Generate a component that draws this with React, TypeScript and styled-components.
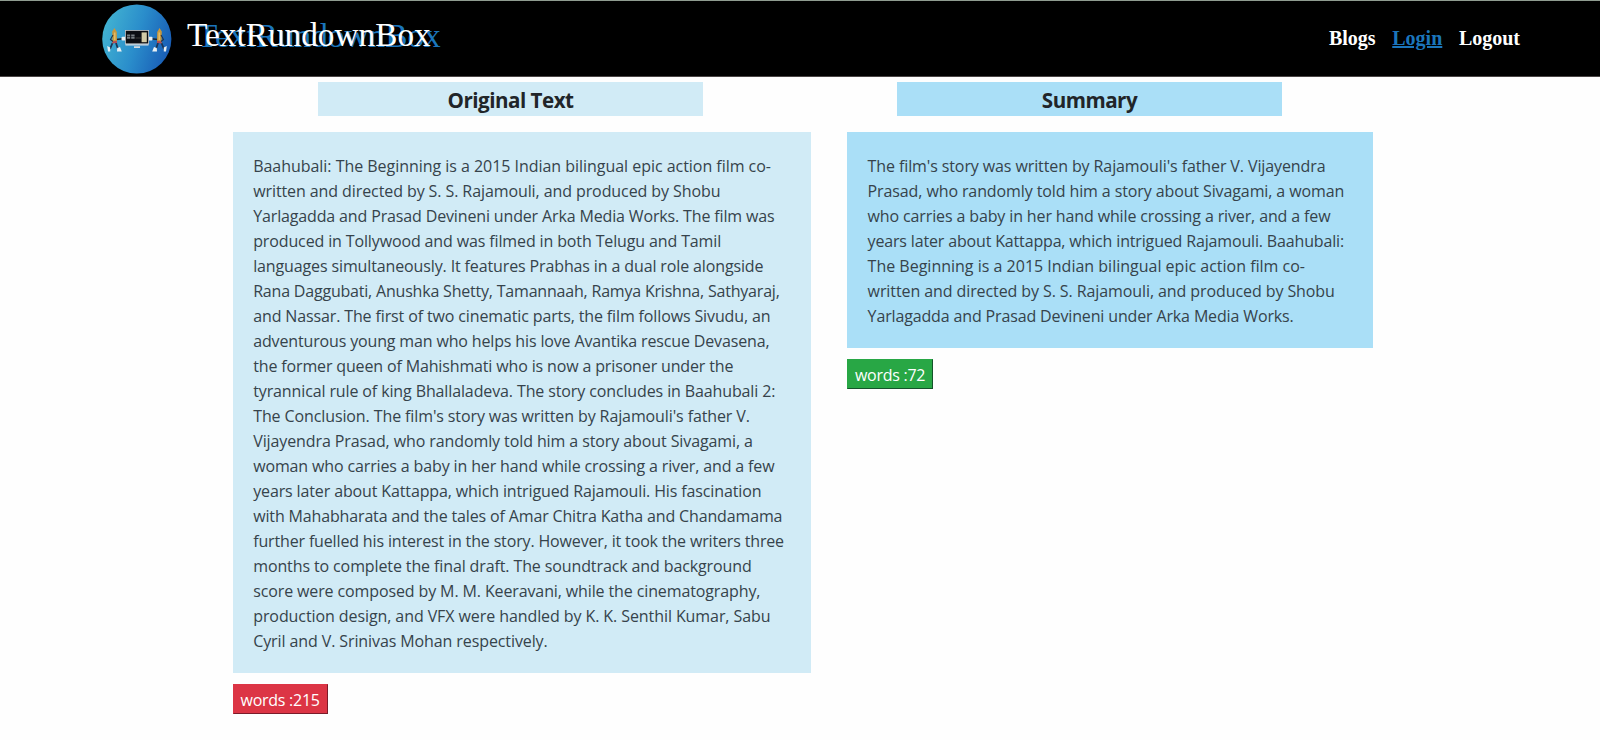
import React from "react";
import styled, { createGlobalStyle } from "styled-components";

const GlobalStyle = createGlobalStyle`
  *, *::before, *::after { box-sizing: border-box; }
  body {
    margin: 0;
    background: #fefefe;
    color: #212529;
    font-family: "Open Sans", "Noto Sans", sans-serif;
  }
`;

const Header = styled.header`
  display: flex;
  align-items: center;
  height: 77px;
  padding: 0 80px 0 102px;
  background: #000;
  border-top: 1px solid #8f9c90;
  border-bottom: 1px solid #4a4545;
  font-family: "Liberation Serif", serif;
`;

const Logo = styled.svg`
  display: block;
  width: 70px;
  height: 70px;
  flex: none;
`;

const Brand = styled.div`
  margin: -8px 0 0 15px;
  color: #fff;
  font-size: 33.3px;
  line-height: 40px;
  text-shadow: 10px 1px 0 #1b75bb;
`;

const Nav = styled.nav`
  display: flex;
  gap: 16.6px;
  margin: -1px 0 0 auto;
`;

const NavLink = styled.a<{ $active?: boolean }>`
  color: ${(p) => (p.$active ? "#1b75bb" : "#fff")};
  font-size: 20px;
  font-weight: 700;
  line-height: 24px;
  text-decoration: ${(p) => (p.$active ? "underline" : "none")};
`;

const Titles = styled.div`
  display: flex;
  gap: 194px;
  margin: 5px 0 16px 318px;
`;

const Title = styled.h2<{ $tone: string }>`
  width: 385px;
  height: 34px;
  margin: 0;
  background: ${(p) => p.$tone};
  font-size: 20.6px;
  font-weight: 700;
  line-height: 37px;
  letter-spacing: -0.5px;
  text-align: center;
`;

const Columns = styled.main`
  display: flex;
  align-items: flex-start;
  gap: 36px;
  margin-left: 232.6px;
`;

const Column = styled.section<{ $width: number }>`
  display: flex;
  flex-direction: column;
  align-items: flex-start;
  gap: 10.8px;
  width: ${(p) => p.$width}px;
`;

const Panel = styled.div<{ $tone: string }>`
  width: 100%;
  padding: 22.4px 0 19.3px 20.6px;
  background: ${(p) => p.$tone};
  color: #36434b;
  font-size: 16px;
  line-height: 24.97px;
`;

const Line = styled.div<{ $spacing: number }>`
  letter-spacing: ${(p) => p.$spacing}px;
  white-space: nowrap;
`;

const WordCount = styled.button<{ $tone: string; $edge: string; $width: number }>`
  width: ${(p) => p.$width}px;
  height: 30px;
  padding: 2px 0 0 7px;
  border: 1px solid ${(p) => p.$tone};
  border-right: 1px solid ${(p) => p.$edge};
  border-bottom: 1px solid ${(p) => p.$edge};
  background: ${(p) => p.$tone};
  color: #fff;
  font: 16px/24px "Open Sans", "Noto Sans", sans-serif;
  letter-spacing: -0.27px;
  text-align: left;
  white-space: nowrap;
`;

const PALE = "#d1ebf6";
const SKY = "#aadff7";

type TextLine = [text: string, spacing: number];

const original: TextLine[] = [
  ["Baahubali: The Beginning is a 2015 Indian bilingual epic action film co-", -0.036],
  ["written and directed by S. S. Rajamouli, and produced by Shobu", -0.09],
  ["Yarlagadda and Prasad Devineni under Arka Media Works. The film was", -0.145],
  ["produced in Tollywood and was filmed in both Telugu and Tamil", -0.13],
  ["languages simultaneously. It features Prabhas in a dual role alongside", -0.127],
  ["Rana Daggubati, Anushka Shetty, Tamannaah, Ramya Krishna, Sathyaraj,", -0.2],
  ["and Nassar. The first of two cinematic parts, the film follows Sivudu, an", -0.13],
  ["adventurous young man who helps his love Avantika rescue Devasena,", -0.149],
  ["the former queen of Mahishmati who is now a prisoner under the", -0.145],
  ["tyrannical rule of king Bhallaladeva. The story concludes in Baahubali 2:", -0.12],
  ["The Conclusion. The film's story was written by Rajamouli's father V.", -0.108],
  ["Vijayendra Prasad, who randomly told him a story about Sivagami, a", -0.098],
  ["woman who carries a baby in her hand while crossing a river, and a few", -0.137],
  ["years later about Kattappa, which intrigued Rajamouli. His fascination", -0.129],
  ["with Mahabharata and the tales of Amar Chitra Katha and Chandamama", -0.149],
  ["further fuelled his interest in the story. However, it took the writers three", -0.153],
  ["months to complete the final draft. The soundtrack and background", -0.115],
  ["score were composed by M. M. Keeravani, while the cinematography,", -0.12],
  ["production design, and VFX were handled by K. K. Senthil Kumar, Sabu", -0.085],
  ["Cyril and V. Srinivas Mohan respectively.", -0.1],
];

const summary: TextLine[] = [
  ["The film's story was written by Rajamouli's father V. Vijayendra", -0.105],
  ["Prasad, who randomly told him a story about Sivagami, a woman", -0.107],
  ["who carries a baby in her hand while crossing a river, and a few", -0.13],
  ["years later about Kattappa, which intrigued Rajamouli. Baahubali:", -0.16],
  ["The Beginning is a 2015 Indian bilingual epic action film co-", 0],
  ["written and directed by S. S. Rajamouli, and produced by Shobu", -0.09],
  ["Yarlagadda and Prasad Devineni under Arka Media Works.", -0.143],
];

const Worker = () => (
  <g>
    <path d="M24 35.5L31 34.8" stroke="#182333" strokeWidth="1.6" />
    <rect x="29.5" y="32.8" width="4.2" height="3.8" rx="1" fill="#e9f0f4" />
    <path d="M20.5 39L18 45M24 39L26 45" stroke="#1c3556" strokeWidth="1.8" fill="none" />
    <path d="M20.2 27.5L22.5 24L24.8 28L25 38.5L20.6 39.3Z" fill="#c9983c" />
    <path d="M22.8 28.5V36" stroke="#e7c676" strokeWidth="1.2" />
    <path d="M20.5 38.5L25 37.8" stroke="#b54a55" strokeWidth="2" />
    <path d="M21 31L18.5 35.5L21 37.5" stroke="#263246" strokeWidth="1.1" fill="none" />
    <path d="M15.2 42L18.2 43.5V47.5H16ZM25.2 44L28 43L29.8 47.5H25Z" fill="#e9f0f4" />
  </g>
);

const BrandLogo = () => (
  <Logo viewBox="0 0 70 70">
    <defs>
      <linearGradient id="disc" x1="0" y1="0.35" x2="1" y2="0.65">
        <stop offset="0" stopColor="#42b3d2" />
        <stop offset="0.5" stopColor="#2a8dcb" />
        <stop offset="1" stopColor="#185bb5" />
      </linearGradient>
    </defs>
    <circle cx="34.8" cy="35" r="34.6" fill="url(#disc)" />
    <g transform="translate(-10 0)">
      <Worker />
    </g>
    <g transform="translate(80 0) scale(-1 1)">
      <Worker />
    </g>
    <rect x="23" y="26" width="24" height="14.4" fill="#c6ced3" />
    <rect x="23.8" y="26.8" width="22.4" height="12.6" fill="#0b0d12" />
    <path d="M25 31.5H28.2M29.2 31.5H32.6M25 33.9H28.2M29.2 33.9H32.6" stroke="#777d82" strokeWidth="1.9" />
    <path d="M33.5 34H39" stroke="#4d4b4a" strokeWidth="0.8" />
    <rect x="39.6" y="28.4" width="5.2" height="9.8" fill="#d3cba6" />
    <path d="M23.5 40.2H46.5V41.6H23.5ZM32 42.2H38V44H32Z" fill="#d5dce0" />
  </Logo>
);

const TextBlock = ({ lines, tone }: { lines: TextLine[]; tone: string }) => (
  <Panel $tone={tone}>
    {lines.map(([text, spacing]) => (
      <Line key={text} $spacing={spacing}>
        {text}
      </Line>
    ))}
  </Panel>
);

export default function App() {
  return (
    <>
      <GlobalStyle />
      <Header>
        <BrandLogo />
        <Brand>TextRundownBox</Brand>
        <Nav>
          <NavLink>Blogs</NavLink>
          <NavLink $active>Login</NavLink>
          <NavLink>Logout</NavLink>
        </Nav>
      </Header>
      <Titles>
        <Title $tone={PALE}>Original Text</Title>
        <Title $tone={SKY}>Summary</Title>
      </Titles>
      <Columns>
        <Column $width={578.4}>
          <TextBlock lines={original} tone={PALE} />
          <WordCount $tone="#dc3545" $edge="#7a1c2a" $width={95}>
            words :215
          </WordCount>
        </Column>
        <Column $width={526}>
          <TextBlock lines={summary} tone={SKY} />
          <WordCount $tone="#28a745" $edge="#14532a" $width={86}>
            words :72
          </WordCount>
        </Column>
      </Columns>
    </>
  );
}
